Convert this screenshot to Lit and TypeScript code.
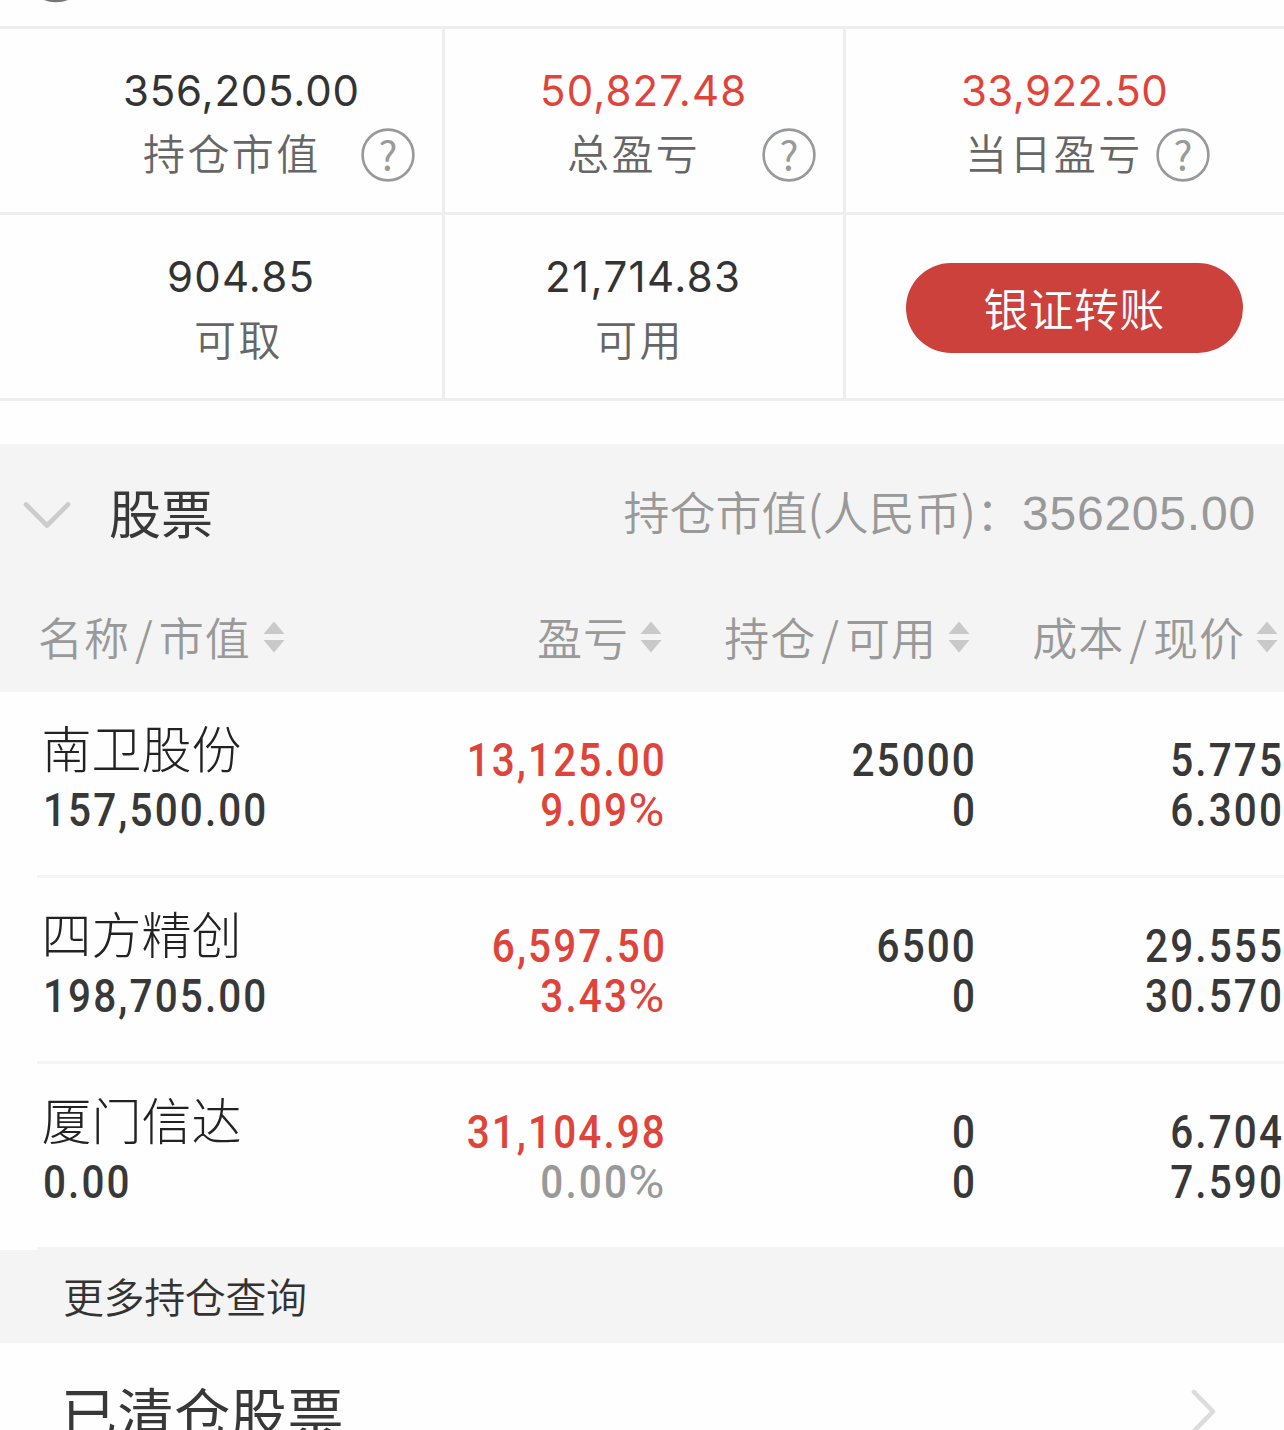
import { LitElement, html, css, svg, nothing } from "lit";
import { customElement, property } from "lit/decorators.js";

interface Metric {
  id: string;
  value: string;
  label: string;
  up?: boolean;
  help?: boolean;
}

interface Holding {
  name: string;
  marketValue: string;
  profit: string;
  percent: string;
  flat?: boolean;
  amount: string;
  available: string;
  cost: string;
  price: string;
}

const METRICS_TOP: Metric[] = [
  { id: "market", value: "356,205.00", label: "持仓市值", help: true },
  { id: "total", value: "50,827.48", label: "总盈亏", up: true, help: true },
  { id: "today", value: "33,922.50", label: "当日盈亏", up: true, help: true },
];

const METRICS_BOTTOM: Metric[] = [
  { id: "withdraw", value: "904.85", label: "可取" },
  { id: "usable", value: "21,714.83", label: "可用" },
];

const HOLDINGS: Holding[] = [
  { name: "南卫股份", marketValue: "157,500.00", profit: "13,125.00", percent: "9.09", amount: "25000", available: "0", cost: "5.775", price: "6.300" },
  { name: "四方精创", marketValue: "198,705.00", profit: "6,597.50", percent: "3.43", amount: "6500", available: "0", cost: "29.555", price: "30.570" },
  { name: "厦门信达", marketValue: "0.00", profit: "31,104.98", percent: "0.00", flat: true, amount: "0", available: "0", cost: "6.704", price: "7.590" },
];

@customElement("help-icon")
export class HelpIcon extends LitElement {
  static styles = css`
    :host { display: block; width: 54px; height: 54px; flex: none; margin-top: 1px; }
    svg { display: block; overflow: visible; }
    text { font-family: "Noto Sans CJK SC", sans-serif; font-size: 40px; font-weight: 400; fill: #9a9a9a; text-anchor: middle; }
  `;
  render() {
    return html`<svg width="54" height="54" viewBox="0 0 54 54">
      <circle cx="27" cy="27" r="25.4" fill="none" stroke="#999" stroke-width="2.6" />
      <text x="27" y="42">?</text>
    </svg>`;
  }
}

@customElement("sort-icon")
export class SortIcon extends LitElement {
  static styles = css`
    :host { display: block; width: 22px; height: 32px; flex: none; }
    svg { display: block; }
  `;
  render() {
    return html`<svg width="22" height="32" viewBox="0 0 22 32" fill="#c9c9c9">
      ${svg`<path d="M11 0.5L21.5 13H0.5Z" /><path d="M11 31.5L21.5 19H0.5Z" />`}
    </svg>`;
  }
}

@customElement("account-metric")
export class AccountMetric extends LitElement {
  @property({ attribute: false }) metric!: Metric;
  static styles = css`
    :host { display: block; padding-top: 37px; white-space: nowrap; }
    .value { font: 400 42px/50px Inter, sans-serif; color: #333; }
    .value.up { color: #e0433a; }
    .line { display: flex; align-items: center; height: 56px; margin-top: 10px; }
    .label { font: 350 42px/56px "Noto Sans CJK SC", sans-serif; letter-spacing: 2.4px; color: #666; margin-top: -5px; }
    .value.market { padding-left: 123px; letter-spacing: 0.8px; }
    .line.market { padding-left: 143px; gap: 40px; }
    .value.total { padding-left: 95px; letter-spacing: 1.1px; }
    .line.total { padding-left: 122px; gap: 62px; }
    .value.today { padding-left: 115px; letter-spacing: 0.4px; }
    .line.today { padding-left: 119px; gap: 13px; }
    .value.withdraw { padding-left: 167px; letter-spacing: 1.2px; }
    .line.withdraw { padding-left: 194px; }
    .value.usable { padding-left: 100px; letter-spacing: 1.4px; }
    .line.usable { padding-left: 150px; }
  `;
  render() {
    const m = this.metric;
    return html`
      <div class="value ${m.id} ${m.up ? "up" : ""}">${m.value}</div>
      <div class="line ${m.id}">
        <span class="label">${m.label}</span>
        ${m.help ? html`<help-icon></help-icon>` : nothing}
      </div>
    `;
  }
}

@customElement("holding-row")
export class HoldingRow extends LitElement {
  @property({ attribute: false }) item!: Holding;
  static styles = css`
    :host { display: block; padding-left: 37px; }
    .row {
      display: grid; grid-template-columns: 324px 300px 310px 307px; box-sizing: border-box;
      height: 186px; padding: 22px 0 0 6px; border-bottom: 3px solid #f4f4f4; white-space: nowrap;
    }
    .name { font: 300 50px/64px "Noto Sans CJK SC", sans-serif; color: #222; margin-left: -1.5px; }
    .num {
      font: 500 46px/50px Roboto, sans-serif; color: #383838; letter-spacing: 2.4px;
      transform: scaleX(0.88); transform-origin: left center;
    }
    .name + .num { margin-top: 7px; }
    .col { padding-top: 21px; text-align: right; }
    .col .num { transform-origin: right center; }
    .num.red { color: #e0433a; }
    .num.grey { color: #999; }
    .pct { display: inline-block; font-weight: 400; margin-left: 7px; transform: scaleX(1.22); transform-origin: right center; }
  `;
  render() {
    const h = this.item;
    return html`
      <div class="row">
        <div><div class="name">${h.name}</div><div class="num">${h.marketValue}</div></div>
        <div class="col"><div class="num red">${h.profit}</div><div class="num ${h.flat ? "grey" : "red"}">${h.percent}<span class="pct">%</span></div></div>
        <div class="col"><div class="num">${h.amount}</div><div class="num">${h.available}</div></div>
        <div class="col"><div class="num">${h.cost}</div><div class="num">${h.price}</div></div>
      </div>
    `;
  }
}

@customElement("app-root")
export class AppRoot extends LitElement {
  static styles = css`
    :host {
      display: block; width: 1284px; height: 1430px; overflow: hidden; background: #fefefe;
      font-family: "Noto Sans CJK SC", sans-serif;
    }
    .strip { height: 26px; padding-left: 36px; border-bottom: 3px solid #eeeeee; }
    .strip svg { display: block; }
    .metrics { display: grid; grid-template-columns: 445px 401px 438px; }
    .cell { height: 183px; border-bottom: 3px solid #eeeeee; }
    .cell.side { border-right: 3px solid #eeeeee; }
    .cell.action { display: flex; justify-content: flex-start; align-items: flex-start; padding: 48px 0 0 60px; box-sizing: border-box; height: 186px; }
    .transfer {
      width: 337px; height: 90px; border: 0; border-radius: 45px; background: #cc413c; color: #fff; padding: 0 1px 1px 0;
      font: 350 45px/84px "Noto Sans CJK SC", sans-serif; letter-spacing: 0.3px;
    }
    .group { margin-top: 43px; height: 248px; background: #f4f4f4; }
    .title { display: flex; align-items: center; height: 142px; padding: 0 28px 0 23px; white-space: nowrap; }
    .title svg { flex: none; }
    .title h2 { margin: -6px auto 0 38px; font: 400 52px/60px "Noto Sans CJK SC", sans-serif; color: #383838; }
    .summary { display: flex; align-items: center; margin-top: -10px; color: #999; }
    .caption { font: 350 46px/60px "Noto Sans CJK SC", sans-serif; }
    .sum { font: 400 48px/60px "Liberation Sans", sans-serif; letter-spacing: 0.8px; padding-top: 6px; margin-bottom: -1px; }
    .heads { display: grid; grid-template-columns: 325px 337px 308px 308px; height: 102px; white-space: nowrap; }
    .head { display: flex; align-items: center; justify-content: flex-end; font-size: 45px; line-height: 60px; letter-spacing: 1px; color: #999; font-weight: 350; }
    .head.first { justify-content: flex-start; padding-left: 38px; }
    .head span { margin-top: 0; margin-right: 11px; }
    .head.first span { margin-right: 12px; }
    .head i { font-style: normal; margin: 0 5px; }
    .more { height: 93px; padding-left: 63px; background: #f4f4f4; font: 350 41px/90px "Noto Sans CJK SC", sans-serif; letter-spacing: -0.4px; color: #333; }
    .closed { display: flex; align-items: flex-start; justify-content: space-between; height: 87px; padding: 28px 67px 0 61px; overflow: hidden; box-sizing: border-box; }
    .closed span { font: 400 56px/80px "Noto Sans CJK SC", sans-serif; letter-spacing: 0.6px; color: #383838; }
    .closed svg { flex: none; margin-top: 18px; }
  `;

  private head(parts: string[], first = false) {
    return html`<div class="head ${first ? "first" : ""}">
      <span>${parts[0]}${parts[1] ? html`<i>/</i>${parts[1]}` : nothing}</span><sort-icon></sort-icon>
    </div>`;
  }

  render() {
    return html`
      <div class="strip">
        <svg width="40" height="4" viewBox="0 0 40 4"><circle cx="20" cy="-30" r="31" fill="none" stroke="#777" stroke-width="2.5" /></svg>
      </div>
      <div class="metrics">
        ${METRICS_TOP.map((m, i) => html`<div class="cell ${i < 2 ? "side" : ""}"><account-metric .metric=${m}></account-metric></div>`)}
        ${METRICS_BOTTOM.map((m) => html`<div class="cell side"><account-metric .metric=${m}></account-metric></div>`)}
        <div class="cell action"><button class="transfer">银证转账</button></div>
      </div>
      <section class="group">
        <div class="title">
          <svg width="48" height="28" viewBox="0 0 48 28" fill="none" stroke="#ccc" stroke-width="4.6" stroke-linecap="round" stroke-linejoin="round"><path d="M3 3.5L24 24.5L45 3.5" /></svg>
          <h2>股票</h2>
          <div class="summary"><span class="caption">持仓市值(人民币)：</span><span class="sum">356205.00</span></div>
        </div>
        <div class="heads">
          ${this.head(["名称", "市值"], true)} ${this.head(["盈亏"])} ${this.head(["持仓", "可用"])} ${this.head(["成本", "现价"])}
        </div>
      </section>
      ${HOLDINGS.map((h) => html`<holding-row .item=${h}></holding-row>`)}
      <div class="more">更多持仓查询</div>
      <div class="closed">
        <span>已清仓股票</span>
        <svg width="26" height="46" viewBox="0 0 26 46" fill="none" stroke="#dcdcdc" stroke-width="4.6" stroke-linecap="round" stroke-linejoin="round"><path d="M3 3L22 22.5L3 42" /></svg>
      </div>
    `;
  }
}
